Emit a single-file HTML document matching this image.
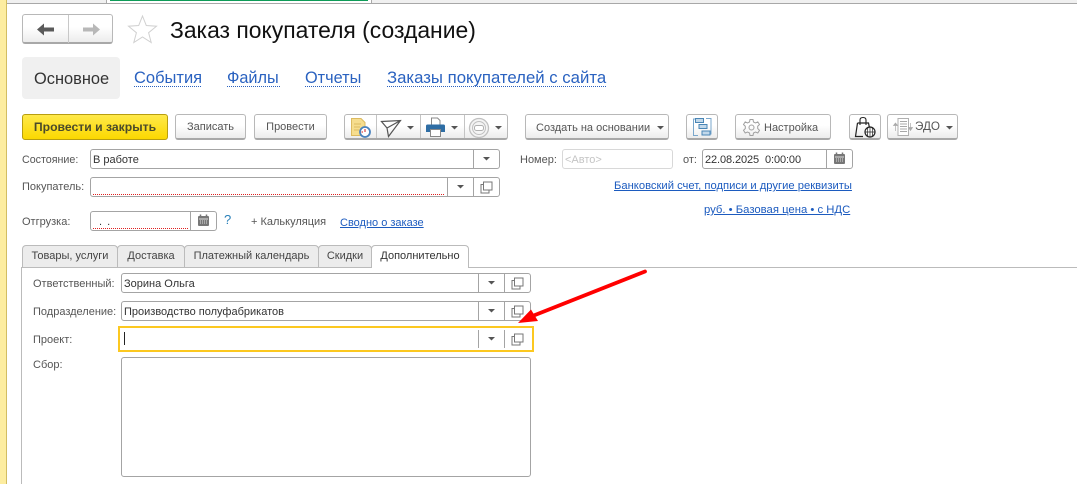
<!DOCTYPE html>
<html><head><meta charset="utf-8"><style>
html,body{margin:0;padding:0;background:#fff}
#p{position:relative;width:1077px;height:484px;overflow:hidden;background:#fff;font-family:"Liberation Sans",sans-serif;font-size:11px;color:#444}
#p div,#p span.t,#p svg{position:absolute;box-sizing:border-box}
.t{white-space:nowrap;line-height:14px}
.btn{background:linear-gradient(#fff,#fff 45%,#ececec);border:1px solid #b8b8b8;border-bottom:2px solid #a8a8a8;border-radius:3px}
.inp{background:#fff;border:1px solid #a4a4a4;border-radius:3px}
.v{width:1px;background:#a4a4a4}
.l{color:#1c5bbf;text-decoration:underline;}
.big{color:#2a62c0;line-height:18px;height:18px}
.dot{height:1px;background:repeating-linear-gradient(90deg,#2a62c0 0 1px,#fff 1px 2px)}
.red{height:1px;background:repeating-linear-gradient(90deg,#e02020 0 1px,#fff 1px 2px)}
.tab{background:#ececec;border:1px solid #bbb;border-bottom:none;border-radius:4px 4px 0 0;height:23px;text-align:center;line-height:20px;color:#444}
</style></head><body><div id="p">
<div style="left:0;top:0;width:6px;height:484px;background:#fdeda0"></div>
<div style="left:6px;top:0;width:1px;height:484px;background:#d2bd62"></div>
<div style="left:7px;top:0;width:99px;height:3px;background:#f0f0f0"></div>
<div style="left:106px;top:0;width:1px;height:3px;background:#aaa"></div>
<div style="left:110px;top:0;width:258px;height:1px;background:#0e9c58"></div>
<div style="left:371px;top:0;width:1px;height:3px;background:#aaa"></div>
<div style="left:372px;top:0;width:705px;height:3px;background:#f0f0f0"></div>
<div style="left:7px;top:3px;width:1070px;height:1px;background:#a8a8a8"></div>

<div class="btn" style="left:22px;top:14px;width:91px;height:30px"></div>
<div style="left:68px;top:15px;width:1px;height:28px;background:#c8c8c8"></div>
<svg style="left:36px;top:22px" width="20" height="15" viewBox="0 0 20 15"><path d="M1 7.500L8 1.500V5.500H18V9.500H8V13.500Z" fill="#5a5a5a"/></svg>
<svg style="left:81px;top:22px" width="20" height="15" viewBox="0 0 20 15"><path d="M19 7.500L12 1.500V5.500H2V9.500H12V13.500Z" fill="#b8b8b8"/></svg>
<svg style="left:127px;top:14px" width="31" height="30" viewBox="0 0 31 30"><path d="M15.500 2L19.300 11.500L29.500 12.200L21.600 18.700L24.200 28.500L15.500 23L6.800 28.500L9.400 18.700L1.500 12.200L11.700 11.500Z" fill="#fff" stroke="#d0d0d0" stroke-width="1"/></svg>
<span class="t" style="left:170px;top:16px;font-size:22.900px;line-height:28px;color:#111">Заказ покупателя (создание)</span>

<div style="left:22px;top:57px;width:98px;height:42px;background:#f0f0f0;border-radius:4px"></div>
<span class="t" style="left:34px;top:69px;font-size:16.400px;line-height:20px;color:#333">Основное</span>
<span class="t big" style="left:134px;top:69px;font-size:16.500px">События</span><div class="dot" style="left:134px;top:86px;width:68px"></div>
<span class="t big" style="left:227px;top:69px;font-size:16.300px">Файлы</span><div class="dot" style="left:227px;top:86px;width:53px"></div>
<span class="t big" style="left:305px;top:69px;font-size:16.300px">Отчеты</span><div class="dot" style="left:305px;top:86px;width:56px"></div>
<span class="t big" style="left:387px;top:69px;font-size:16.750px">Заказы покупателей с сайта</span><div class="dot" style="left:387px;top:86px;width:219px"></div>

<div style="left:22px;top:114px;width:146px;height:26px;border:1px solid #b89e10;border-radius:3px;background:linear-gradient(#ffe94a,#fbd800);text-align:center;line-height:25px;font-weight:bold;color:#4a4a2a;font-size:12.200px;white-space:nowrap">Провести и закрыть</div>
<div class="btn" style="left:175px;top:114px;width:71px;height:26px;text-align:center;line-height:25px;color:#555">Записать</div>
<div class="btn" style="left:254px;top:114px;width:73px;height:26px;text-align:center;line-height:25px;color:#555">Провести</div>

<div class="btn" style="left:344px;top:114px;width:164px;height:26px"></div>
<div style="left:376px;top:115px;width:1px;height:23px;background:#c4c4c4"></div>
<div style="left:420px;top:115px;width:1px;height:23px;background:#c4c4c4"></div>
<div style="left:464px;top:115px;width:1px;height:23px;background:#c4c4c4"></div>
<svg style="left:350px;top:117px" width="22" height="22" viewBox="0 0 22 22"><path d="M1.500 1.500H11L15 5.500V18.500H1.500Z" fill="#f6dd8e" stroke="#dcba60"/><path d="M4 7H11M4 10H10M4 13H9" stroke="#dcba60"/><circle cx="15" cy="15" r="5" fill="#fff" stroke="#4a82bd" stroke-width="1.800"/><path d="M15 12V15" stroke="#d94040" stroke-width="1.200" fill="none"/><path d="M11.500 15H13" stroke="#d94040" stroke-width="1.200"/></svg>
<svg style="left:380px;top:119px" width="23" height="19" viewBox="0 0 23 19"><path d="M1.500 2.500L20.500 1.500L8.500 17.500L7 9ZM7 9L20.500 1.500" fill="none" stroke="#555" stroke-width="1.200"/></svg>
<svg style="left:425px;top:117px" width="21" height="21" viewBox="0 0 21 21"><path d="M6.500 1H12.500L15 3.500V8H6.500Z" fill="#fff" stroke="#888"/><path d="M2.500 7.500H18.500Q20 7.500 20 9V15H1V9Q1 7.500 2.500 7.500Z" fill="#2e6da4"/><rect x="5.500" y="12.500" width="10" height="7" fill="#fff" stroke="#888"/></svg>
<svg style="left:468px;top:117px" width="22" height="22" viewBox="0 0 22 22"><circle cx="11" cy="11" r="9.500" fill="#f4f4f4" stroke="#c0c0c0" stroke-width="1.300"/><circle cx="11" cy="11" r="6.500" fill="none" stroke="#c0c0c0"/><rect x="6.500" y="8.500" width="9" height="5" rx="2" fill="#fff" stroke="#b0b0b0"/></svg>
<svg style="left:407px;top:126px" width="8" height="4"><path d="M0 0H7L3.500 3.500Z" fill="#555"/></svg>
<svg style="left:451px;top:126px" width="8" height="4"><path d="M0 0H7L3.500 3.500Z" fill="#555"/></svg>
<svg style="left:495px;top:126px" width="8" height="4"><path d="M0 0H7L3.500 3.500Z" fill="#555"/></svg>

<div class="btn" style="left:525px;top:114px;width:144px;height:26px"></div>
<span class="t" style="left:536px;top:121px;color:#555">Создать на основании</span>
<svg style="left:657px;top:126px" width="7" height="4"><path d="M0 0H7L3.500 3.500Z" fill="#555"/></svg>

<div class="btn" style="left:686px;top:114px;width:32px;height:26px"></div>
<svg style="left:692px;top:117px" width="20" height="20" viewBox="0 0 20 20"><path d="M4 2H1.500V18.500H6M14 1.500H19V17H17" fill="none" stroke="#7aa7cc"/><rect x="3.500" y="1.500" width="8" height="4" fill="#c2d8ea" stroke="#4a86b6"/><rect x="7" y="7.500" width="8" height="4" fill="#c2d8ea" stroke="#4a86b6"/><rect x="10" y="14" width="8" height="4" fill="#c2d8ea" stroke="#4a86b6"/></svg>

<div class="btn" style="left:735px;top:114px;width:96px;height:26px"></div>
<svg style="left:742px;top:118px" width="19" height="19" viewBox="0 0 19 19"><path d="M8 1.500H11L11.500 4L13.500 5L15.800 3.900L17.500 6.500L15.700 8.200V10.500L17.500 12.300L15.800 15L13.500 14L11.500 15L11 17.500H8L7.500 15L5.500 14L3.200 15L1.500 12.300L3.300 10.500V8.200L1.500 6.500L3.200 3.900L5.500 5L7.500 4Z" fill="none" stroke="#a0a0a0"/><circle cx="9.500" cy="9.500" r="2.500" fill="none" stroke="#a0a0a0"/></svg>
<span class="t" style="left:764px;top:121px;font-size:11px;color:#555">Настройка</span>

<div class="btn" style="left:849px;top:114px;width:32px;height:26px"></div>
<svg style="left:854px;top:116px" width="24" height="23" viewBox="0 0 24 23"><path d="M3.500 7H14.500L15.500 12M3.500 7L1.500 20.500H9" fill="none" stroke="#222" stroke-width="1.200"/><path d="M6 9V4Q6 1.500 9 1.500Q12 1.500 12 4V9" fill="none" stroke="#222" stroke-width="1.100"/><circle cx="16" cy="16" r="5" fill="#fff" stroke="#222" stroke-width="1.200"/><path d="M11 16H21M16 11V21M14 11.500Q12.500 16 14 20.500M18 11.500Q19.500 16 18 20.500" fill="none" stroke="#222" stroke-width=".7"/></svg>

<div class="btn" style="left:887px;top:114px;width:71px;height:26px"></div>
<svg style="left:892px;top:117px" width="22" height="20" viewBox="0 0 22 20"><path d="M6 1.500H16.500V18.500H6Z" fill="#fff" stroke="#b0b0b0"/><path d="M8 4.500H15M8 7H15M8 9.500H15M8 12H15M8 14.500H15" stroke="#a8a8a8"/><path d="M3.500 14V8M3.500 6L1.500 8.500H5.500ZM18.500 6V11M18.500 13.500L16.500 10.500H20.500Z" fill="#aaa" stroke="#aaa" stroke-width=".7"/></svg>
<span class="t" style="left:915px;top:120px;font-size:11.700px;color:#555">ЭДО</span>
<svg style="left:946px;top:126px" width="7" height="4"><path d="M0 0H7L3.500 3.500Z" fill="#555"/></svg>

<span class="t" style="left:22px;top:153px;color:#555;font-size:10.700px">Состояние:</span>
<div class="inp" style="left:90px;top:149px;width:410px;height:20px"></div>
<div class="v" style="left:473px;top:150px;height:18px"></div>
<span class="t" style="left:93px;top:153px;color:#333">В работе</span>
<svg style="left:483px;top:157px" width="8" height="4"><path d="M0 0H7L3.500 3.500Z" fill="#555"/></svg>

<span class="t" style="left:520px;top:153px;color:#555">Номер:</span>
<div class="inp" style="left:562px;top:149px;width:111px;height:20px;border-color:#d8d8d8"></div>
<span class="t" style="left:565px;top:153px;color:#c4c4c4">&lt;Авто&gt;</span>
<span class="t" style="left:683px;top:153px;color:#555">от:</span>
<div class="inp" style="left:702px;top:149px;width:151px;height:20px"></div>
<div class="v" style="left:826px;top:150px;height:18px"></div>
<span class="t" style="left:705px;top:153px;color:#333;letter-spacing:-.1px">22.08.2025&nbsp; 0:00:00</span>
<svg style="left:833px;top:152px" width="13" height="13" viewBox="0 0 13 13"><rect x="1" y="2" width="11" height="10" rx="1" fill="#777"/><path d="M3.500 .5V3M9.500 .5V3" stroke="#777" stroke-width="1.500"/><path d="M2 5H11" stroke="#ddd"/><path d="M3 7H4M5 7H6M7 7H8M9 7H10M3 9H4M5 9H6M7 9H8M9 9H10" stroke="#ddd"/></svg>

<span class="t" style="left:22px;top:180px;color:#555">Покупатель:</span>
<div class="inp" style="left:90px;top:177px;width:410px;height:20px"></div>
<div class="red" style="left:93px;top:194px;width:351px"></div>
<div class="v" style="left:447px;top:178px;height:18px"></div>
<div class="v" style="left:473px;top:178px;height:18px"></div>
<svg style="left:457px;top:185px" width="8" height="4"><path d="M0 0H7L3.500 3.500Z" fill="#555"/></svg>
<svg style="left:480px;top:181px" width="13" height="13" viewBox="0 0 13 13"><path d="M3.500 3.500H1V12H9V9.500" fill="none" stroke="#777"/><rect x="3.500" y="1" width="8.500" height="8" fill="#fff" stroke="#777"/></svg>

<span class="t l" style="left:614px;top:179px;font-size:11.220px">Банковский счет, подписи и другие реквизиты</span>
<span class="t l" style="left:704px;top:203px;font-size:11.300px">руб. • Базовая цена • с НДС</span>

<span class="t" style="left:22px;top:215px;color:#555">Отгрузка:</span>
<div class="inp" style="left:90px;top:211px;width:127px;height:20px"></div>
<div class="v" style="left:190px;top:212px;height:18px"></div>
<span class="t" style="left:99px;top:215px;color:#333;word-spacing:2px">. .</span>
<div class="red" style="left:93px;top:228px;width:95px"></div>
<svg style="left:197px;top:214px" width="13" height="13" viewBox="0 0 13 13"><rect x="1" y="2" width="11" height="10" rx="1" fill="#777"/><path d="M3.500 .5V3M9.500 .5V3" stroke="#777" stroke-width="1.500"/><path d="M2 5H11" stroke="#ddd"/><path d="M3 7H4M5 7H6M7 7H8M9 7H10M3 9H4M5 9H6M7 9H8M9 9H10" stroke="#ddd"/></svg>
<span class="t" style="left:224px;top:213px;font-size:13px;color:#2a80b9">?</span>
<span class="t" style="left:251px;top:215px;color:#555">+ Калькуляция</span>
<span class="t l" style="left:340px;top:216px;font-size:11px">Сводно о заказе</span>

<div style="left:469px;top:267px;width:608px;height:1px;background:#bbb"></div>
<div style="left:21px;top:267px;width:1px;height:217px;background:#bbb"></div>
<div class="tab" style="left:22px;top:245px;width:96px">Товары, услуги</div>
<div class="tab" style="left:117px;top:245px;width:68px">Доставка</div>
<div class="tab" style="left:184px;top:245px;width:135px">Платежный календарь</div>
<div class="tab" style="left:318px;top:245px;width:54px">Скидки</div>
<div class="tab" style="left:371px;top:245px;width:98px;background:#fff;color:#333">Дополнительно</div>
<div style="left:22px;top:267px;width:349px;height:1px;background:#bbb"></div>

<span class="t" style="left:33px;top:277px;color:#555">Ответственный:</span>
<div class="inp" style="left:121px;top:273px;width:410px;height:20px"></div>
<div class="v" style="left:478px;top:274px;height:18px"></div>
<div class="v" style="left:504px;top:274px;height:18px"></div>
<span class="t" style="left:124px;top:277px;color:#333">Зорина Ольга</span>
<svg style="left:488px;top:281px" width="8" height="4"><path d="M0 0H7L3.500 3.500Z" fill="#555"/></svg>
<svg style="left:511px;top:277px" width="13" height="13" viewBox="0 0 13 13"><path d="M3.500 3.500H1V12H9V9.500" fill="none" stroke="#777"/><rect x="3.500" y="1" width="8.500" height="8" fill="#fff" stroke="#777"/></svg>

<span class="t" style="left:33px;top:305px;color:#555">Подразделение:</span>
<div class="inp" style="left:121px;top:301px;width:410px;height:20px"></div>
<div class="v" style="left:478px;top:302px;height:18px"></div>
<div class="v" style="left:504px;top:302px;height:18px"></div>
<span class="t" style="left:124px;top:305px;color:#333">Производство полуфабрикатов</span>
<svg style="left:488px;top:309px" width="8" height="4"><path d="M0 0H7L3.500 3.500Z" fill="#555"/></svg>
<svg style="left:511px;top:305px" width="13" height="13" viewBox="0 0 13 13"><path d="M3.500 3.500H1V12H9V9.500" fill="none" stroke="#777"/><rect x="3.500" y="1" width="8.500" height="8" fill="#fff" stroke="#777"/></svg>

<span class="t" style="left:33px;top:333px;color:#555">Проект:</span>
<div style="left:118px;top:326px;width:416px;height:26px;border:2px solid #fcc820;background:#fff"></div>
<div class="v" style="left:478px;top:330px;height:18px"></div>
<div class="v" style="left:504px;top:330px;height:18px"></div>
<div style="left:124px;top:332px;width:1px;height:13px;background:#222"></div>
<svg style="left:488px;top:337px" width="8" height="4"><path d="M0 0H7L3.500 3.500Z" fill="#555"/></svg>
<svg style="left:511px;top:333px" width="13" height="13" viewBox="0 0 13 13"><path d="M3.500 3.500H1V12H9V9.500" fill="none" stroke="#777"/><rect x="3.500" y="1" width="8.500" height="8" fill="#fff" stroke="#777"/></svg>

<span class="t" style="left:33px;top:358px;color:#555">Сбор:</span>
<div class="inp" style="left:121px;top:357px;width:410px;height:120px"></div>

<svg style="left:0;top:0" width="1077" height="484"><path d="M645 271.500L530 317" stroke="#f00" stroke-width="3.800" stroke-linecap="round" fill="none"/><path d="M518 323L531 309.500L538 321Z" fill="#f00"/></svg>
</div></body></html>
